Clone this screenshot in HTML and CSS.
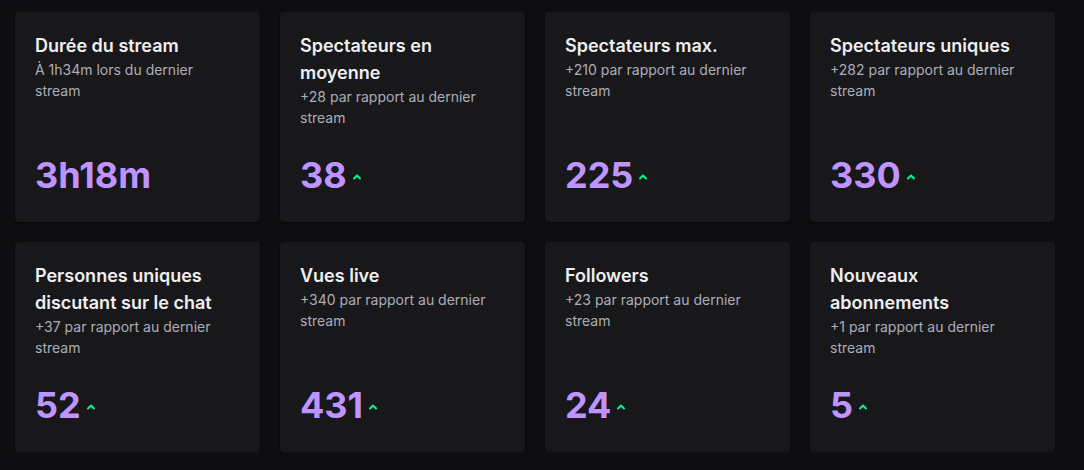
FILE: index.html
```html
<!DOCTYPE html>
<html lang="fr">
<head>
<meta charset="utf-8">
<link rel="stylesheet" href="styles.css">
</head>
<body>
<div class="grid">
  <div class="card">
    <div class="title">Durée du stream</div>
    <div class="sub">À 1h34m lors du dernier stream</div>
    <div class="value"><span class="num">3h18m</span></div>
  </div>
  <div class="card">
    <div class="title">Spectateurs en moyenne</div>
    <div class="sub">+28 par rapport au dernier stream</div>
    <div class="value"><span class="num">38</span><svg class="caret" viewBox="0 0 10 7" width="10" height="7"><path d="M2 5.5 L5 2.5 L8 5.5" fill="none" stroke="#00f593" stroke-width="2" stroke-linecap="round" stroke-linejoin="round"/></svg></div>
  </div>
  <div class="card">
    <div class="title">Spectateurs max.</div>
    <div class="sub">+210 par rapport au dernier stream</div>
    <div class="value"><span class="num">225</span><svg class="caret" viewBox="0 0 10 7" width="10" height="7"><path d="M2 5.5 L5 2.5 L8 5.5" fill="none" stroke="#00f593" stroke-width="2" stroke-linecap="round" stroke-linejoin="round"/></svg></div>
  </div>
  <div class="card">
    <div class="title">Spectateurs uniques</div>
    <div class="sub">+282 par rapport au dernier stream</div>
    <div class="value"><span class="num">330</span><svg class="caret" viewBox="0 0 10 7" width="10" height="7"><path d="M2 5.5 L5 2.5 L8 5.5" fill="none" stroke="#00f593" stroke-width="2" stroke-linecap="round" stroke-linejoin="round"/></svg></div>
  </div>
  <div class="card">
    <div class="title">Personnes uniques discutant sur le chat</div>
    <div class="sub">+37 par rapport au dernier stream</div>
    <div class="value"><span class="num">52</span><svg class="caret" viewBox="0 0 10 7" width="10" height="7"><path d="M2 5.5 L5 2.5 L8 5.5" fill="none" stroke="#00f593" stroke-width="2" stroke-linecap="round" stroke-linejoin="round"/></svg></div>
  </div>
  <div class="card">
    <div class="title">Vues live</div>
    <div class="sub">+340 par rapport au dernier stream</div>
    <div class="value"><span class="num">431</span><svg class="caret" viewBox="0 0 10 7" width="10" height="7"><path d="M2 5.5 L5 2.5 L8 5.5" fill="none" stroke="#00f593" stroke-width="2" stroke-linecap="round" stroke-linejoin="round"/></svg></div>
  </div>
  <div class="card">
    <div class="title">Followers</div>
    <div class="sub">+23 par rapport au dernier stream</div>
    <div class="value"><span class="num">24</span><svg class="caret" viewBox="0 0 10 7" width="10" height="7"><path d="M2 5.5 L5 2.5 L8 5.5" fill="none" stroke="#00f593" stroke-width="2" stroke-linecap="round" stroke-linejoin="round"/></svg></div>
  </div>
  <div class="card">
    <div class="title">Nouveaux abonnements</div>
    <div class="sub">+1 par rapport au dernier stream</div>
    <div class="value"><span class="num">5</span><svg class="caret" viewBox="0 0 10 7" width="10" height="7"><path d="M2 5.5 L5 2.5 L8 5.5" fill="none" stroke="#00f593" stroke-width="2" stroke-linecap="round" stroke-linejoin="round"/></svg></div>
  </div>
</div>
</body>
</html>
```
FILE: styles.css
```css
html, body {
  margin: 0;
  padding: 0;
  background: #0e0e10;
  font-family: Inter, "Noto Sans", sans-serif;
  color: #efeff1;
}
.grid {
  display: grid;
  grid-template-columns: repeat(4, 245px);
  grid-auto-rows: 210px;
  gap: 20px;
  padding: 12px 0 0 15px;
}
.card {
  background: #18181b;
  border-radius: 4px;
  box-shadow: 0 1px 2px rgba(0,0,0,0.6);
  padding: 20px;
  display: flex;
  flex-direction: column;
  box-sizing: border-box;
}
.title {
  font-size: 18px;
  line-height: 27px;
  font-weight: 600;
  color: #efeff1;
  padding-right: 20px;
}
.sub {
  font-size: 14px;
  line-height: 21px;
  color: #adadb8;
  padding-right: 10px;
}
.value {
  margin-top: auto;
  display: flex;
  align-items: center;
  height: 54px;
}
.num {
  font-size: 36px;
  line-height: 54px;
  font-weight: 700;
  color: #bf94ff;
}
.caret {
  margin-left: 5px;
  margin-top: 2px;
}
```
